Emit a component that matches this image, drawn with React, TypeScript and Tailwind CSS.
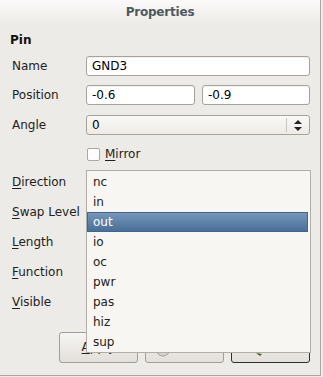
import React from "react";

const font = { fontFamily: '"DejaVu Sans", "Liberation Sans", sans-serif' };

function U({ c }: { c: string }) {
  return <span className="underline underline-offset-[2px] decoration-1">{c}</span>;
}

function Label({ children }: { children: React.ReactNode }) {
  return <div className="text-[12px] text-[#222] leading-[14px]">{children}</div>;
}

function Input({ value, className = "" }: { value: string; className?: string }) {
  return (
    <div
      className={
        "h-[20px] rounded-[3px] border border-[#a7a39c] bg-white pl-[5px] text-[12px] leading-[18px] text-black shadow-[inset_0_1px_1px_rgba(0,0,0,0.06)] " +
        className
      }
    >
      {value}
    </div>
  );
}

const items = ["nc", "in", "out", "io", "oc", "pwr", "pas", "hiz", "sup"];

export default function App() {
  return (
    <div className="w-[323px] h-[377px] bg-[#edebe7] overflow-hidden" style={font}>
      <div className="relative w-[321px] h-[376px] border-r border-b border-[#a9a7a2] bg-[#edebe7] flex flex-col">
        {/* title bar */}
        <div className="h-[24px] shrink-0 bg-gradient-to-b from-[#fbfaf9] to-[#edebe7] flex items-center justify-center">
          <span className="text-[12px] font-bold text-[#4d5a61] tracking-[-0.2px]">Properties</span>
        </div>

        <div className="mt-[9px] pl-[10px] text-[12px] font-bold text-[#111] leading-[14px]">Pin</div>

        <div className="mt-[9px] pl-[12px] pr-[10px] grid grid-cols-[74px_1fr] items-center">
          <Label>Name</Label>
          <Input value="GND3" />
        </div>

        <div className="mt-[9px] pl-[12px] pr-[10px] grid grid-cols-[74px_1fr] items-center">
          <Label>Position</Label>
          <div className="flex gap-[7px]">
            <Input value="-0.6" className="w-[109px]" />
            <Input value="-0.9" className="flex-1" />
          </div>
        </div>

        <div className="mt-[10px] pl-[12px] pr-[10px] grid grid-cols-[74px_1fr] items-center">
          <Label>Angle</Label>
          <div className="h-[20px] rounded-[3px] border border-[#a7a39c] bg-gradient-to-b from-[#faf9f8] to-[#eeebe7] flex items-center text-[12px] text-black">
            <span className="pl-[5px] flex-1">0</span>
            <div className="w-px h-[14px] bg-[#c9c5bf]" />
            <div className="w-[22px] flex items-center justify-center">
              <svg width="8" height="11" viewBox="0 0 8 11">
                <path d="M4 0 L8 4 L0 4 Z" fill="#222" />
                <path d="M0 7 L8 7 L4 11 Z" fill="#222" />
              </svg>
            </div>
          </div>
        </div>

        <div className="mt-[9px] pl-[87px] h-[20px] flex items-center">
          <div className="w-[13px] h-[13px] rounded-[2px] border border-[#aaa6a0] bg-white" />
          <span className="ml-[5px] text-[12px] text-[#222]">
            <U c="M" />irror
          </span>
        </div>

        <div className="mt-[3px] pl-[12px] flex flex-col">
          <div className="h-[30px] flex items-center"><Label><U c="D" />irection</Label></div>
          <div className="h-[30px] flex items-center"><Label><U c="S" />wap Level</Label></div>
          <div className="h-[30px] flex items-center"><Label><U c="L" />ength</Label></div>
          <div className="h-[30px] flex items-center"><Label><U c="F" />unction</Label></div>
          <div className="h-[30px] flex items-center"><Label><U c="V" />isible</Label></div>
        </div>

        {/* buttons */}
        <div className="mt-[15px] pl-[59px] pr-[10px] flex gap-[7px]">
          <div className="w-[79px] h-[31px] rounded-[3px] border border-[#a39f98] bg-gradient-to-b from-[#f6f5f3] to-[#e3dfda] flex items-center justify-center text-[12px] leading-[14px] text-[#222]">
            <span className="-mt-[2px]"><U c="A" />pply</span>
          </div>
          <div className="w-[79px] h-[31px] rounded-[3px] border border-[#a39f98] bg-gradient-to-b from-[#f6f5f3] to-[#e3dfda] flex items-center justify-center gap-[3px] text-[12px] leading-[14px] text-[#222]">
            <svg width="16" height="16" viewBox="0 0 16 16" className="mt-[3px]">
              <circle cx="8" cy="8" r="7" fill="#d6d4d0" stroke="#a09e9a" />
            </svg>
            <span className="-mt-[4px]">Cancel</span>
          </div>
          <div className="w-[79px] h-[31px] rounded-[3px] border border-[#2e2e2e] bg-gradient-to-b from-[#f6f5f3] to-[#e3dfda] flex items-center justify-center gap-[3px] text-[12px] leading-[14px] text-[#222]">
            <svg width="16" height="16" viewBox="0 0 16 16" className="mt-[3px]">
              <path d="M2 6 L6 10 L14 2" stroke="#4a6a3a" strokeWidth="3" fill="none" />
              <path d="M4 12 L10 13 L8 15 Z" fill="#3e5a30" />
            </svg>
            <span className="-mt-[4px]">OK</span>
          </div>
        </div>

        {/* dropdown popup */}
        <div className="absolute left-[86px] top-[170px] w-[225px] h-[183px] border border-[#b1aea9] bg-[#f8f6f2] pt-[1px] pr-[2px]">
          {items.map((it) =>
            it === "out" ? (
              <div
                key={it}
                className="h-[20px] flex items-center pl-[5px] text-[12px] text-white bg-gradient-to-b from-[#7596ba] to-[#4a6f97] border border-[#43658c]"
              >
                {it}
              </div>
            ) : (
              <div key={it} className="h-[20px] flex items-center pl-[6px] text-[12px] text-[#222]">
                {it}
              </div>
            )
          )}
        </div>
      </div>
    </div>
  );
}
